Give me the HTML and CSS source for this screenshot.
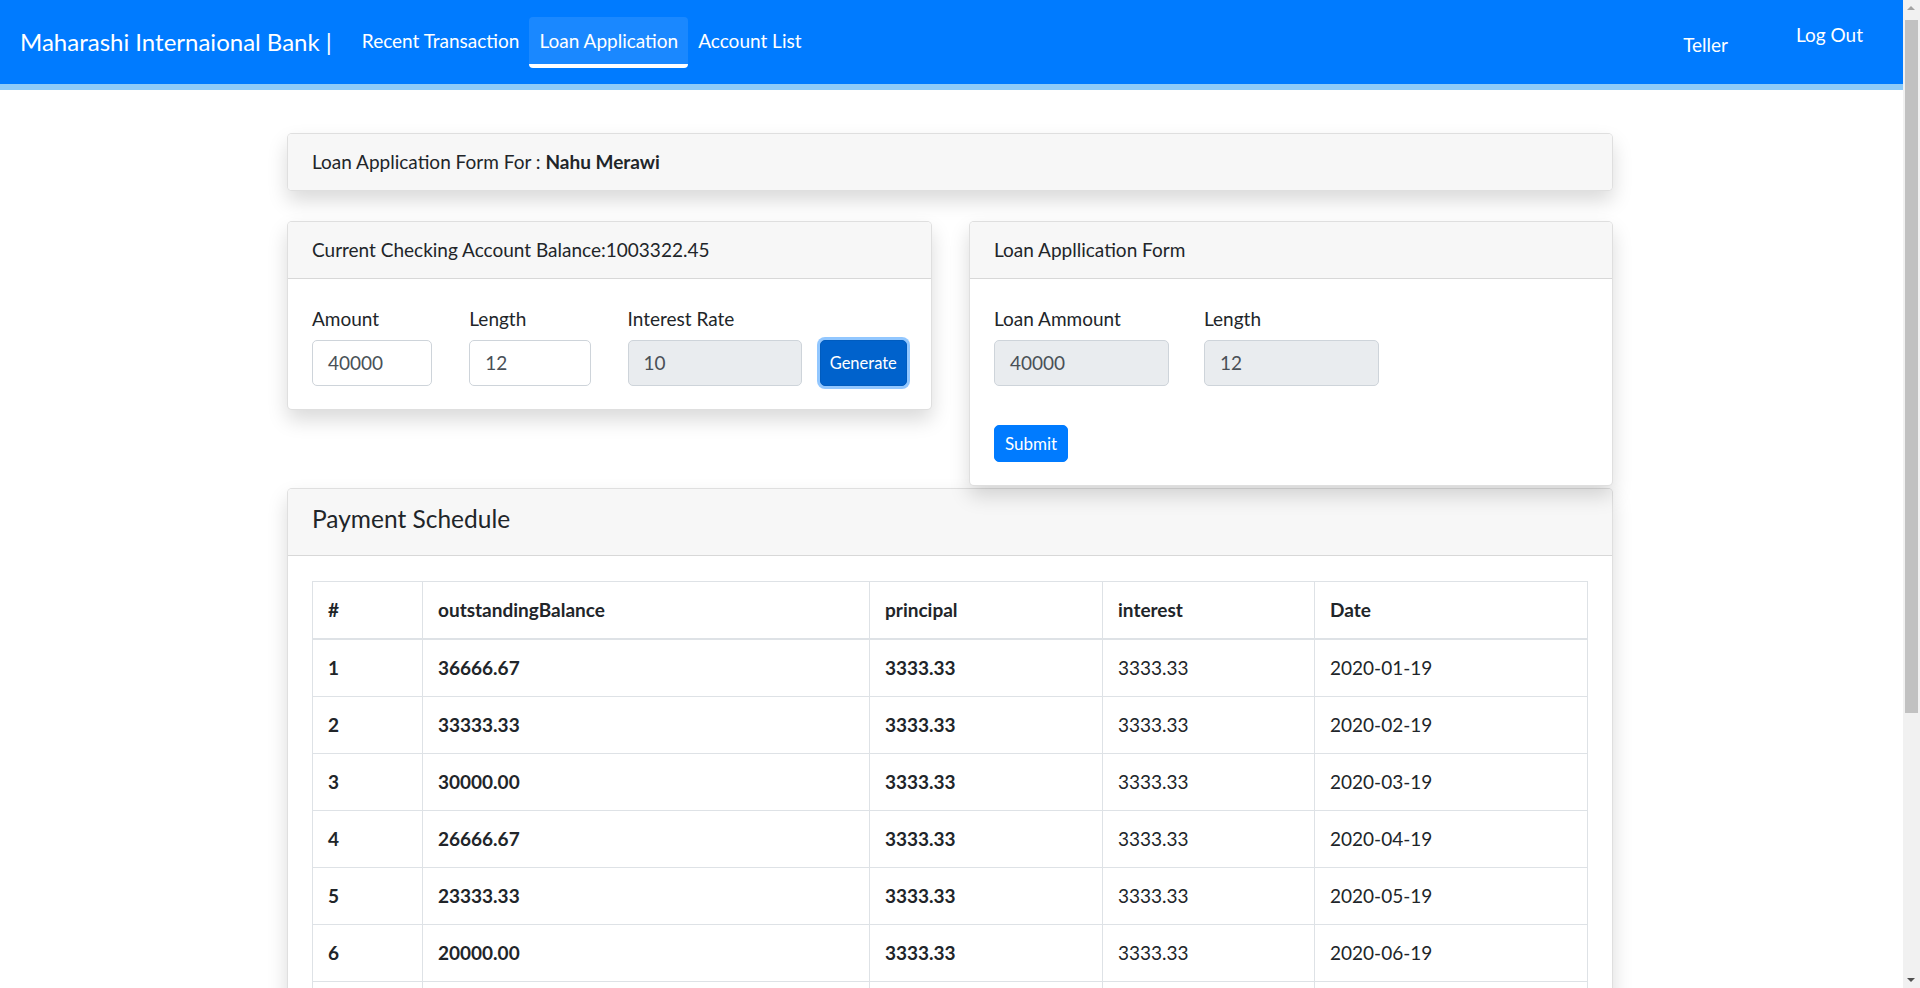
FILE: index.html
```html
<!DOCTYPE html>
<html lang="en">
<head>
<meta charset="utf-8">
<title>Loan Application</title>
<link rel="stylesheet" href="styles.css">
</head>
<body>
<nav class="navbar">
  <a class="brand" href="#">Maharashi Internaional Bank |</a>
  <ul class="nav-links">
    <li><a class="nav-link" href="#">Recent Transaction</a></li>
    <li><a class="nav-link active" href="#">Loan Application</a></li>
    <li><a class="nav-link" href="#">Account List</a></li>
  </ul>
  <div class="nav-right">
    <span class="teller">Teller</span>
    <a class="logout" href="#">Log Out</a>
  </div>
</nav>

<main class="container">
  <div class="card title-card">
    <div class="card-header">Loan Application Form For : <strong>Nahu Merawi</strong></div>
  </div>

  <div class="forms-row">
    <div class="card balance-card">
      <div class="card-header">Current Checking Account Balance:1003322.45</div>
      <div class="card-body">
        <div class="field-row">
          <div class="field w-amount">
            <label>Amount</label>
            <div class="input">40000</div>
          </div>
          <div class="field w-length">
            <label>Length</label>
            <div class="input">12</div>
          </div>
          <div class="field w-rate">
            <label>Interest Rate</label>
            <div class="input disabled">10</div>
          </div>
          <button class="btn btn-generate" type="button">Generate</button>
        </div>
      </div>
    </div>

    <div class="card loan-card">
      <div class="card-header">Loan Appllication Form</div>
      <div class="card-body">
        <div class="field-row wide-gap">
          <div class="field w-wide">
            <label>Loan Ammount</label>
            <div class="input disabled">40000</div>
          </div>
          <div class="field w-wide">
            <label>Length</label>
            <div class="input disabled">12</div>
          </div>
        </div>
        <button class="btn btn-submit" type="button">Submit</button>
      </div>
    </div>
  </div>

  <div class="card schedule-card">
    <div class="card-header schedule-header">Payment Schedule</div>
    <div class="card-body">
      <table class="schedule">
        <colgroup>
          <col class="c1"><col class="c2"><col class="c3"><col class="c4"><col>
        </colgroup>
        <thead>
          <tr><th>#</th><th>outstandingBalance</th><th>principal</th><th>interest</th><th>Date</th></tr>
        </thead>
        <tbody>
          <tr><th>1</th><th>36666.67</th><th>3333.33</th><td>3333.33</td><td>2020-01-19</td></tr>
          <tr><th>2</th><th>33333.33</th><th>3333.33</th><td>3333.33</td><td>2020-02-19</td></tr>
          <tr><th>3</th><th>30000.00</th><th>3333.33</th><td>3333.33</td><td>2020-03-19</td></tr>
          <tr><th>4</th><th>26666.67</th><th>3333.33</th><td>3333.33</td><td>2020-04-19</td></tr>
          <tr><th>5</th><th>23333.33</th><th>3333.33</th><td>3333.33</td><td>2020-05-19</td></tr>
          <tr><th>6</th><th>20000.00</th><th>3333.33</th><td>3333.33</td><td>2020-06-19</td></tr>
          <tr><th>7</th><th>16666.67</th><th>3333.33</th><td>3333.33</td><td>2020-07-19</td></tr>
          <tr><th>8</th><th>13333.33</th><th>3333.33</th><td>3333.33</td><td>2020-08-19</td></tr>
          <tr><th>9</th><th>10000.00</th><th>3333.33</th><td>3333.33</td><td>2020-09-19</td></tr>
          <tr><th>10</th><th>6666.67</th><th>3333.33</th><td>3333.33</td><td>2020-10-19</td></tr>
          <tr><th>11</th><th>3333.33</th><th>3333.33</th><td>3333.33</td><td>2020-11-19</td></tr>
          <tr><th>12</th><th>0.00</th><th>3333.33</th><td>3333.33</td><td>2020-12-19</td></tr>
        </tbody>
      </table>
    </div>
  </div>
</main>

<div class="scrollbar" aria-hidden="true">
  <span class="sb-arrow sb-up"></span>
  <span class="sb-thumb"></span>
  <span class="sb-track"></span>
  <span class="sb-arrow sb-down"></span>
</div>
</body>
</html>
```

FILE: styles.css
```css
* { box-sizing: border-box; }

html, body {
  margin: 0;
  padding: 0;
}

body {
  margin-right: 17px;
  font-family: "Lato", "Open Sans", "Liberation Sans", sans-serif;
  font-size: 19px;
  line-height: 30px;
  color: #212529;
  background: #fff;
}

a { text-decoration: none; color: inherit; }

/* ---------- navbar ---------- */
.navbar {
  display: flex;
  align-items: center;
  height: 90px;
  padding: 0 40px 0 20px;
  background: #007bff;
  border-bottom: 6px solid #8ecbf8;
  color: #fff;
}

.brand {
  font-size: 24px;
  line-height: 36px;
  margin-right: 20px;
  color: #fff;
}

.nav-links {
  display: flex;
  list-style: none;
  margin: 0;
  padding: 0;
}

.nav-link {
  display: block;
  padding: 9px 10px 8px;
  line-height: 30px;
  font-size: 19px;
  color: #fff;
  border-bottom: 4px solid transparent;
  border-radius: 4px;
}

.nav-link.active {
  background: rgba(255, 255, 255, 0.1);
  border-bottom-color: #fff;
}

.nav-right {
  margin-left: auto;
  display: flex;
  align-items: center;
  gap: 68px;
}

.teller {
  margin-top: 6px;
  font-size: 19px;
}

.logout {
  margin-bottom: 14px;
  font-size: 19px;
  color: #fff;
}

/* ---------- content ---------- */
.container {
  width: 1326px;
  margin: 43px 0 0 calc(50% - 664.5px);
}

.card {
  background: #fff;
  border: 1px solid rgba(0, 0, 0, 0.125);
  border-radius: 5px;
  box-shadow: 0 10px 20px rgba(0, 0, 0, 0.15);
  overflow: hidden;
}

.card-header {
  background: #f7f7f7;
  padding: 13px 24px;
  line-height: 30px;
  border-bottom: 1px solid rgba(0, 0, 0, 0.125);
}

.title-card .card-header { border-bottom: 0; }

.card-header strong { font-weight: 700; }

.card-body {
  padding: 25px 24px 23px;
}

.forms-row {
  display: flex;
  align-items: flex-start;
  gap: 37px;
  margin-top: 30px;
}

.balance-card { width: 645px; }
.loan-card { width: 644px; }

.field-row {
  display: flex;
  align-items: flex-end;
  gap: 37px;
}

.field-row.wide-gap { gap: 35px; }

.field label {
  display: block;
  line-height: 30px;
  margin-bottom: 6px;
}

.w-amount { width: 121px; }
.w-length { width: 122px; }
.w-rate { width: 175px; }
.w-wide { width: 175px; }

.input {
  height: 46px;
  padding: 0 15px;
  line-height: 44px;
  border: 1px solid #ced4da;
  border-radius: 5px;
  color: #495057;
  background: #fff;
}

.input.disabled { background: #e9ecef; }

.btn {
  font-family: inherit;
  color: #fff;
  border-radius: 5px;
  cursor: pointer;
}

.btn-generate {
  margin-left: -19px;
  width: 88px;
  height: 46px;
  padding: 0;
  font-size: 16.5px;
  background: #0062cc;
  border: 1px solid #005cbf;
  box-shadow: 0 0 0 3px rgba(38, 143, 255, 0.5);
}

.btn-submit {
  margin-top: 39px;
  width: 74px;
  height: 37px;
  padding: 0;
  font-size: 17px;
  background: #007bff;
  border: 1px solid #007bff;
}

.schedule-card {
  margin-top: 2px;
  border-bottom-left-radius: 0;
  border-bottom-right-radius: 0;
}

.schedule-header {
  font-size: 24.5px;
  line-height: 36px;
  padding: 12px 24px 18px;
}

/* ---------- table ---------- */
.schedule {
  width: 100%;
  border-collapse: collapse;
  table-layout: fixed;
}

.schedule col.c1 { width: 110px; }
.schedule col.c2 { width: 447px; }
.schedule col.c3 { width: 233px; }
.schedule col.c4 { width: 212px; }

.schedule th,
.schedule td {
  text-align: left;
  padding: 13px 15px;
  line-height: 30px;
  border: 1px solid #dee2e6;
  vertical-align: top;
}

.schedule th { font-weight: 700; }
.schedule td { font-weight: 400; }

.schedule thead th {
  border-bottom: 2px solid #dee2e6;
}

/* ---------- fake classic scrollbar (overlay on the right edge) ---------- */
.scrollbar {
  position: fixed;
  top: 0;
  right: 0;
  width: 17px;
  height: 100%;
  display: flex;
  flex-direction: column;
  background: #f1f1f1;
}

.sb-arrow {
  flex: 0 0 17px;
  position: relative;
}

.sb-arrow::after {
  content: "";
  position: absolute;
  left: 4px;
  width: 0;
  height: 0;
  border-left: 4px solid transparent;
  border-right: 4px solid transparent;
}

.sb-up::after {
  top: 6px;
  border-bottom: 4px solid #a3a3a3;
}

.sb-down::after {
  top: 7px;
  border-top: 4px solid #505050;
}

.sb-thumb {
  flex: 0 0 693px;
  margin: 3px 2px 0;
  background: #c1c1c1;
}

.sb-track { flex: 1; }
```
